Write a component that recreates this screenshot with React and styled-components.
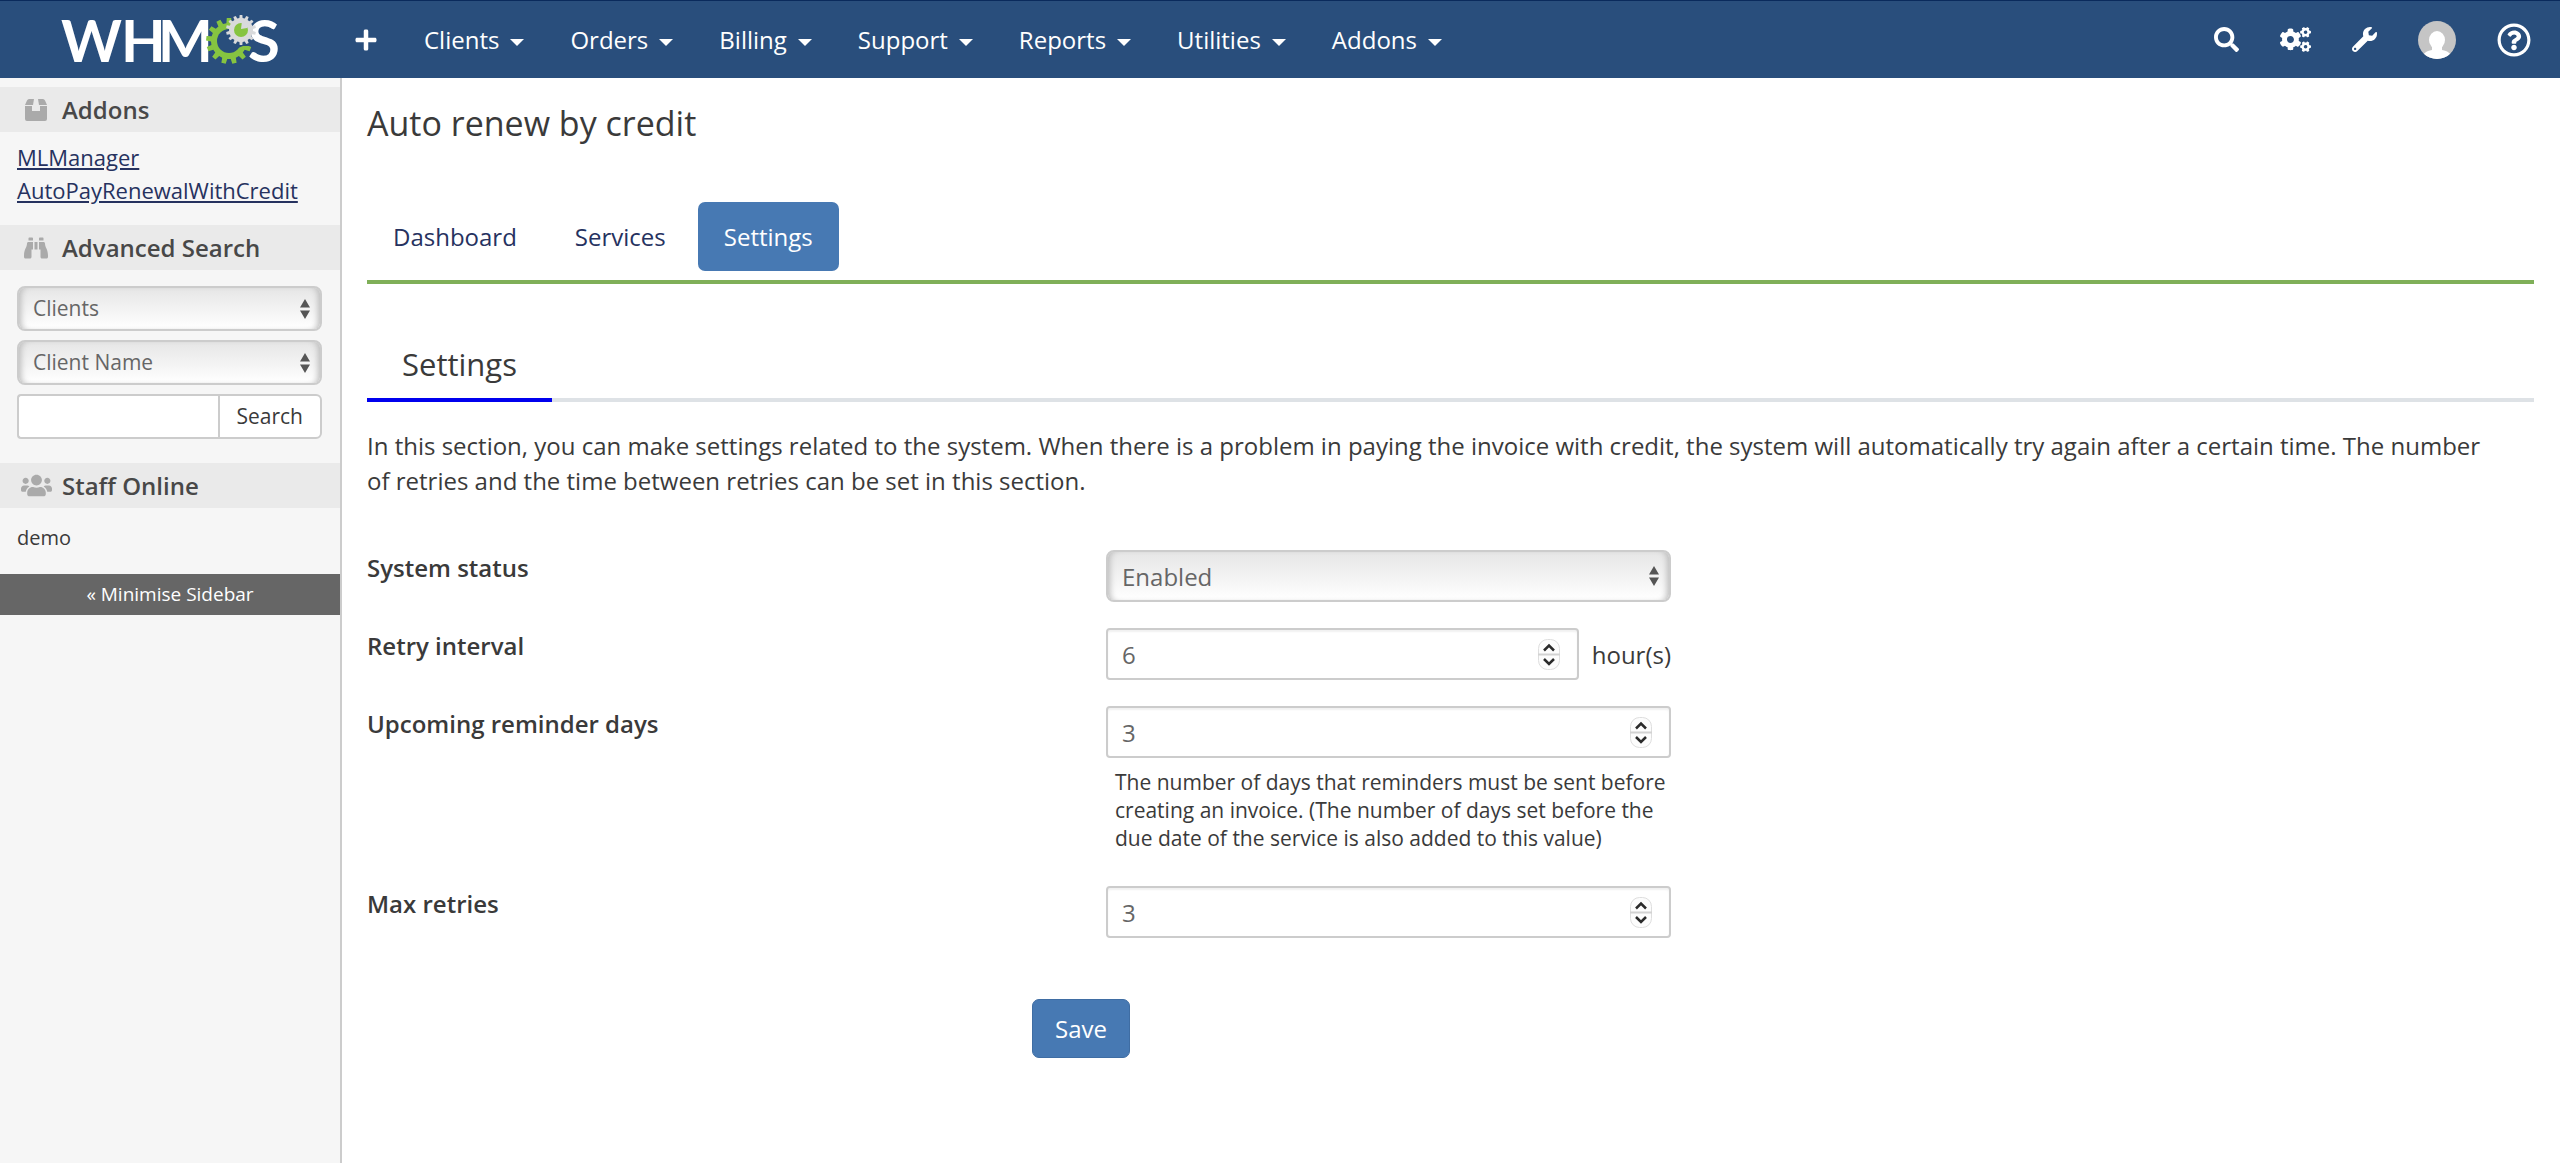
import styled, { createGlobalStyle } from "styled-components";
import {
  FaPlus,
  FaSearch,
  FaCogs,
  FaWrench,
  FaBinoculars,
  FaUsers,
  FaRegQuestionCircle,
} from "react-icons/fa";

const palette = {
  header: "#294e7c",
  headerTop: "#0a2a5c",
  link: "#26325f",
  primary: "#4779b3",
  green: "#7faf58",
  border: "#cccccc",
  text: "#3a3a3a",
  muted: "#666666",
};

const menus = ["Clients", "Orders", "Billing", "Support", "Reports", "Utilities", "Addons"];
const tabs = ["Dashboard", "Services", "Settings"];

// gear outline made of alternating teeth
const gearPath = (cx, cy, outer, inner, teeth) => {
  const step = (Math.PI * 2) / teeth;
  const point = (radius, angle) =>
    `${(cx + radius * Math.cos(angle)).toFixed(2)} ${(cy + radius * Math.sin(angle)).toFixed(2)}`;
  let d = "";
  for (let i = 0; i < teeth; i++) {
    const a = i * step - Math.PI / 2;
    d += `${i === 0 ? "M" : "L"}${point(inner, a - step * 0.3)}`;
    d += `L${point(outer, a - step * 0.2)}L${point(outer, a + step * 0.2)}`;
    d += `L${point(inner, a + step * 0.3)}`;
  }
  return `${d}Z`;
};

const Logo = () => (
  <LogoLink href="#" aria-label="WHMCS">
    <svg width="224" height="74" viewBox="0 -11 224 74">
      <LogoText x="0 60 97" y="48">WHM</LogoText>
      <path fill="#86c440" d={gearPath(168, 27, 23, 18, 13)} />
      <circle cx="168" cy="27" r="12" fill={palette.header} />
      <path fill={palette.header} d="M168 12H196V32H182L177 34Z" />
      <LogoText x="187" y="48">S</LogoText>
      <path fill="#d9dadb" d={gearPath(180, 16, 15, 12, 14)} />
      <circle cx="180" cy="16" r="7" fill="#86c440" />
      <path fill="#d9dadb" d="M180 15L181 7L189 11L186 14Z" />
    </svg>
  </LogoLink>
);

const BoxIcon = () => (
  <svg width="22" height="22" viewBox="0 0 22 22" fill="currentColor" aria-hidden="true">
    <path d="M4 0H9L8 6H0L2 1.500Q2.700 0 4 0ZM13 0H18Q19.300 0 20 1.500L22 6H14Z" />
    <path d="M0 7H7V12H15V7H22V20Q22 22 20 22H2Q0 22 0 20Z" />
  </svg>
);

const NumberField = ({ id, value }) => (
  <NumberBox>
    <NumberInput id={id} type="number" defaultValue={value} />
    <Spinner aria-hidden="true">
      <svg width="22" height="31" viewBox="0 0 22 31">
        <rect x="0.5" y="0.5" width="21" height="30" rx="9" fill="#fcfcfc" stroke="#dedede" />
        <path d="M0 15.500H22" stroke="#d2d2d2" strokeWidth="2" />
        <path d="M6 11.500L11 6.500L16 11.500M6 20L11 25L16 20" fill="none" stroke="#2a2a2a" strokeWidth="2.5" />
      </svg>
    </Spinner>
  </NumberBox>
);

const SelectField = ({ id, small, option, label }) => (
  <SelectBox>
    <Select id={id} $small={small} aria-label={label}>
      <option>{option}</option>
    </Select>
    <Arrows viewBox="0 0 10 20" aria-hidden="true">
      <path d="M5 0L10 8.500H0ZM0 11.500H10L5 20Z" fill="#555555" />
    </Arrows>
  </SelectBox>
);

const App = () => {
  return (
    <Page>
      <GlobalStyle />
      <Header>
        <Logo />
        <IconLink href="#" aria-label="Add new">
          <FaPlus size={24} />
        </IconLink>
        <Menu>
          {menus.map((menu) => (
            <MenuButton key={menu} type="button">
              {menu}
              <Caret />
            </MenuButton>
          ))}
        </Menu>
        <Tools>
          <IconLink href="#" aria-label="Search">
            <FaSearch size={25} />
          </IconLink>
          <IconLink href="#" aria-label="Configuration">
            <FaCogs size={31} />
          </IconLink>
          <IconLink href="#" aria-label="Setup">
            <FaWrench size={25} />
          </IconLink>
          <IconLink href="#" aria-label="Account">
            <svg width="38" height="38" viewBox="0 0 38 38">
              <clipPath id="avatar">
                <circle cx="19" cy="19" r="19" />
              </clipPath>
              <g clipPath="url(#avatar)">
                <rect width="38" height="38" fill="#c5c5c5" />
                <ellipse cx="19" cy="19" rx="8" ry="9" fill="#fff" />
                <path d="M14 24H24V29C30 30 33 32 34 38H4C5 32 8 30 14 29Z" fill="#fff" />
              </g>
            </svg>
          </IconLink>
          <IconLink href="#" aria-label="Help">
            <FaRegQuestionCircle size={34} />
          </IconLink>
        </Tools>
      </Header>

      <Body>
        <Sidebar>
          {/* Addons */}
          <SideTitle>
            <SideIcon><BoxIcon /></SideIcon>
            Addons
          </SideTitle>
          <SideLinks>
            <a href="#">MLManager</a>
            <a href="#">AutoPayRenewalWithCredit</a>
          </SideLinks>

          {/* Advanced Search */}
          <SideTitle>
            <SideIcon><FaBinoculars size={24} /></SideIcon>
            Advanced Search
          </SideTitle>
          <SideForm>
            <SelectField small option="Clients" label="Search type" />
            <SelectField small option="Client Name" label="Search field" />
            <SearchGroup>
              <SearchInput type="text" aria-label="Search term" />
              <SearchButton type="button">Search</SearchButton>
            </SearchGroup>
          </SideForm>

          {/* Staff Online */}
          <SideTitle>
            <SideIcon><FaUsers size={31} /></SideIcon>
            Staff Online
          </SideTitle>
          <Staff>demo</Staff>
          <Minimise type="button">« Minimise Sidebar</Minimise>
        </Sidebar>

        <Content>
          <PageTitle>Auto renew by credit</PageTitle>
          <Tabs>
            {tabs.map((tab) => (
              <Tab key={tab} href="#" $active={tab === "Settings"}>
                {tab}
              </Tab>
            ))}
          </Tabs>

          <SectionBar>
            <SectionTitle>Settings</SectionTitle>
          </SectionBar>
          <Intro>
            In this section, you can make settings related to the system. When there is a problem in
            paying the invoice with credit, the system will automatically try again after a certain
            time. The number of retries and the time between retries can be set in this section.
          </Intro>

          <Form>
            <Row>
              <Label htmlFor="status">System status</Label>
              <Field>
                <SelectField id="status" option="Enabled" />
              </Field>
            </Row>
            <Row>
              <Label htmlFor="interval">Retry interval</Label>
              <Field>
                <Inline>
                  <NumberField id="interval" value={6} />
                  hour(s)
                </Inline>
              </Field>
            </Row>
            <Row>
              <Label htmlFor="reminder">Upcoming reminder days</Label>
              <Field>
                <NumberField id="reminder" value={3} />
                <Help>
                  The number of days that reminders must be sent before creating an invoice. (The
                  number of days set before the due date of the service is also added to this value)
                </Help>
              </Field>
            </Row>
            <Row>
              <Label htmlFor="retries">Max retries</Label>
              <Field>
                <NumberField id="retries" value={3} />
              </Field>
            </Row>
            <Actions>
              <SaveButton type="button">Save</SaveButton>
            </Actions>
          </Form>
        </Content>
      </Body>
    </Page>
  );
};

const GlobalStyle = createGlobalStyle`
  * {
    box-sizing: border-box;
  }
  body {
    margin: 0;
    background: #ffffff;
    color: ${palette.text};
    font-family: "Open Sans", sans-serif;
    font-size: 24px;
    line-height: 35px;
  }
  button, input, select {
    font: inherit;
  }
`;

const Page = styled.div`
  display: flex;
  flex-direction: column;
  min-height: 100vh;
`;

// Header ------------------------------------------------------------
const Header = styled.header`
  display: flex;
  align-items: center;
  height: 78px;
  padding: 0 29px 0 61px;
  background: ${palette.header};
  border-top: 1px solid ${palette.headerTop};
`;

const LogoLink = styled.a`
  display: flex;
  align-items: center;
  margin-right: 69px;
`;

const LogoText = styled.text`
  fill: #ffffff;
  font-family: Lato, sans-serif;
  font-size: 58px;
  font-weight: 700;
`;

const IconLink = styled.a`
  display: flex;
  align-items: center;
  color: #ffffff;
`;

const Menu = styled.nav`
  display: flex;
  gap: 46px;
  margin-left: 46px;
`;

const MenuButton = styled.button`
  display: flex;
  align-items: center;
  gap: 11px;
  padding: 0;
  border: none;
  background: none;
  color: #ffffff;
`;

const Caret = styled.span`
  margin-top: 5px;
  border-top: 7px solid #ffffff;
  border-left: 7px solid transparent;
  border-right: 7px solid transparent;
`;

const Tools = styled.div`
  display: flex;
  align-items: center;
  gap: 41px;
  margin-left: auto;
`;

// Sidebar -----------------------------------------------------------
const Body = styled.div`
  display: flex;
  flex: 1;
`;

const Sidebar = styled.aside`
  flex: 0 0 342px;
  min-width: 0;
  padding-top: 9px;
  background: #f6f6f6;
  border-right: 2px solid ${palette.border};
`;

const SideTitle = styled.h2`
  display: flex;
  align-items: center;
  height: 45px;
  margin: 0;
  padding-left: 18px;
  background: #eaeaea;
  color: #484848;
  font-size: 24px;
  font-weight: 600;
`;

const SideIcon = styled.span`
  display: flex;
  justify-content: center;
  width: 36px;
  margin-right: 8px;
  color: #aaaaaa;
`;

const SideLinks = styled.div`
  display: flex;
  flex-direction: column;
  padding: 9px 17px 18px;
  font-size: 22px;
  line-height: 33px;

  a {
    color: ${palette.link};
  }
`;

const SideForm = styled.div`
  display: flex;
  flex-direction: column;
  gap: 9px;
  padding: 16px 18px 24px 17px;
  font-size: 21px;
`;

const SelectBox = styled.div`
  position: relative;
  display: flex;
`;

const Select = styled.select`
  appearance: none;
  width: 100%;
  height: ${(props) => (props.$small ? 45 : 52)}px;
  padding: 0 14px;
  border: 2px solid ${palette.border};
  border-radius: 8px;
  background: linear-gradient(#e6e6e6, #ffffff);
  box-shadow: inset 6px 0 6px -4px #bbbbbb, inset -6px 0 6px -4px #bbbbbb;
  color: ${palette.muted};
`;

// drawn over the select's own arrow area
const Arrows = styled.svg`
  position: absolute;
  top: 0;
  bottom: 0;
  right: 12px;
  width: 10px;
  height: 20px;
  margin: auto 0;
  pointer-events: none;
`;

const SearchGroup = styled.div`
  display: flex;
  height: 45px;
`;

const SearchInput = styled.input`
  flex: 1;
  min-width: 0;
  border: 2px solid ${palette.border};
  border-right: none;
  border-radius: 4px 0 0 4px;
  background: #ffffff;
`;

const SearchButton = styled.button`
  padding: 0 17px;
  border: 2px solid ${palette.border};
  border-radius: 0 6px 6px 0;
  background: #ffffff;
  color: ${palette.text};
`;

const Staff = styled.p`
  margin: 0;
  padding: 12px 17px 19px;
  font-size: 20px;
`;

const Minimise = styled.button`
  display: block;
  width: 100%;
  height: 41px;
  padding: 0;
  border: none;
  background: ${palette.muted};
  color: #ffffff;
  font-size: 19px;
`;

// Content -----------------------------------------------------------
const Content = styled.main`
  flex: 1;
  min-width: 0;
  padding: 24px 26px 24px 25px;
`;

const PageTitle = styled.h1`
  margin: 0;
  font-size: 34px;
  font-weight: 400;
  line-height: 42px;
`;

const Tabs = styled.nav`
  display: flex;
  gap: 6px;
  margin-top: 58px;
  padding-bottom: 9px;
  border-bottom: 4px solid ${palette.green};
`;

const Tab = styled.a`
  padding: 17px 26px;
  border-radius: 7px;
  background: ${(props) => (props.$active ? palette.primary : "transparent")};
  color: ${(props) => (props.$active ? "#ffffff" : palette.link)};
  text-decoration: none;
`;

const SectionBar = styled.div`
  display: flex;
  margin-top: 50px;
  box-shadow: inset 0 -4px 0 #dee2e6;
`;

const SectionTitle = styled.h2`
  margin: 0;
  padding: 11px 35px 15px;
  border-bottom: 4px solid #0000ee;
  font-size: 31px;
  font-weight: 400;
  line-height: 38px;
`;

const Intro = styled.p`
  margin: 26px 0 52px;
  padding-right: 32px;
`;

const Form = styled.form`
  display: flex;
  flex-direction: column;
  gap: 26px;
`;

const Row = styled.div`
  display: grid;
  grid-template-columns: 739px 565px;
`;

const Label = styled.label`
  font-weight: 600;
`;

const Field = styled.div`
  min-width: 0;
`;

const Inline = styled.div`
  display: flex;
  align-items: center;
  gap: 13px;
`;

const NumberBox = styled.div`
  position: relative;
  flex: 1;
`;

const NumberInput = styled.input`
  appearance: textfield;
  display: block;
  width: 100%;
  height: 52px;
  padding: 0 14px;
  border: 2px solid ${palette.border};
  border-radius: 4px;
  background: #ffffff;
  box-shadow: inset 0 2px 2px rgba(0, 0, 0, 0.06);
  color: ${palette.muted};

  &::-webkit-inner-spin-button {
    appearance: none;
  }
`;

// stepper drawn over the right end of the number input
const Spinner = styled.span`
  position: absolute;
  top: 0;
  bottom: 0;
  right: 19px;
  display: flex;
  align-items: center;
  pointer-events: none;
`;

const Help = styled.p`
  margin: 10px 0 8px;
  padding-left: 9px;
  font-size: 21px;
  line-height: 28px;
`;

const Actions = styled.div`
  display: flex;
  padding-left: 665px;
  margin-top: 35px;
`;

const SaveButton = styled.button`
  height: 59px;
  padding: 0 22px;
  border: 1px solid #3f6da3;
  border-radius: 7px;
  background: ${palette.primary};
  color: #ffffff;
`;

export default App;
